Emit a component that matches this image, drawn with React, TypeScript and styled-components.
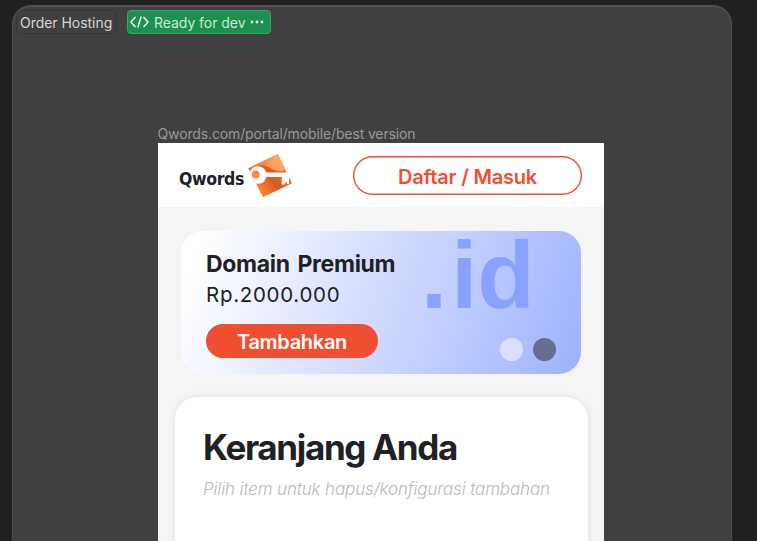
import React from "react";
import styled, { createGlobalStyle } from "styled-components";

const GlobalStyle = createGlobalStyle`
  * { box-sizing: border-box; }
  body { margin: 0; background: #202020; overflow: hidden; font-family: Inter, "Liberation Sans", sans-serif; }
`;

const Canvas = styled.div`
  height: 541px;
  padding: 5px 25px 0 12px;
  overflow: hidden;
  background: #202020;
`;

const Section = styled.section`
  height: 580px;
  border: 1.5px solid #525252;
  border-width: 2px 1px 1px;
  border-radius: 19px;
  background: #404040;
  overflow: hidden;
`;

const Labels = styled.div`
  display: flex;
  gap: 10px;
  padding: 3px 0 0 3px;
`;

const SectionName = styled.div`
  width: 101px;
  height: 24px;
  padding-left: 3px;
  border: 1px solid #373737;
  border-radius: 5px;
  color: #d6d6d6;
  font-size: 14px;
  line-height: 23px;
  letter-spacing: -0.04px;
  white-space: nowrap;
`;

const Status = styled.div`
  display: flex;
  align-items: center;
  width: 144px;
  height: 24px;
  padding-left: 2px;
  border: 1px solid #36a765;
  border-radius: 4px;
  background: #1b9150;
  color: #c9ead6;
  font-size: 14px;
  white-space: nowrap;
  svg { flex: none; }
`;

const StatusText = styled.span`
  width: 96px;
  margin-left: 5px;
  line-height: 23px;
  letter-spacing: -0.05px;
`;

const FrameName = styled.div`
  margin: 91px 0 0 144.5px;
  height: 18px;
  color: #989898;
  font-size: 14px;
  line-height: 18px;
  letter-spacing: -0.13px;
  white-space: nowrap;
`;

const Phone = styled.main`
  width: 446px;
  height: 440px;
  margin-left: 145px;
  background: #f5f5f5;
  overflow: hidden;
`;

const Header = styled.header`
  display: flex;
  justify-content: space-between;
  height: 64px;
  padding: 13px 22px 0 21px;
  background: #fff;
`;

const Brand = styled.div`
  display: flex;
  height: 45px;
  margin-top: -3px;
`;

const BrandName = styled.span`
  width: 69px;
  color: #202124;
  font: bold 17.5px/52px "DejaVu Sans Condensed", "DejaVu Sans", sans-serif;
  font-stretch: condensed;
  letter-spacing: -0.35px;
`;

const Login = styled.button`
  width: 229px;
  height: 39px;
  padding: 3px 0 0;
  border: 0;
  border-radius: 20px;
  box-shadow: inset 0 0 0 1.4px #f04e30;
  background: #fff;
  color: #f04e30;
  font: 600 20px/36px Inter, sans-serif;
  letter-spacing: -0.2px;
`;

const Banner = styled.section`
  display: flex;
  justify-content: space-between;
  width: 400px;
  height: 143px;
  margin: 24px 0 0 23px;
  padding-left: 25px;
  border-radius: 22px;
  background: linear-gradient(109deg, #fff 5%, #a0b3ff 98%);
`;

const Offer = styled.div`
  padding-top: 18px;
  color: #202124;
  white-space: nowrap;
`;

const Product = styled.h2`
  margin: 0;
  font-size: 23px;
  font-weight: 700;
  line-height: 30px;
  letter-spacing: -0.3px;
  word-spacing: 2.5px;
`;

const Price = styled.div`
  font-size: 20.5px;
  line-height: 32px;
  letter-spacing: 0.7px;
`;

const AddButton = styled.button`
  display: block;
  width: 172px;
  height: 34px;
  margin-top: 13px;
  padding: 3px 0 0;
  border: 0;
  border-radius: 17px;
  background: #f04e30;
  color: #fff;
  font: 600 20px/31px Inter, sans-serif;
  letter-spacing: -0.3px;
`;

const Promo = styled.div`
  width: 160px;
`;

const Extension = styled.div`
  height: 107px;
  color: #8aa2ff;
  font-family: "Liberation Sans", Arial, sans-serif;
  font-size: 94px;
  font-weight: 700;
  line-height: 90px;
  letter-spacing: 0;
  white-space: nowrap;
`;

const Point = styled.span`
  letter-spacing: 4px;
`;

const Dots = styled.div`
  display: flex;
  gap: 10px;
  margin-left: 79px;
`;

const Dot = styled.i<{ $active?: boolean }>`
  width: 23px;
  height: 23px;
  border-radius: 50%;
  background: ${({ $active }) => ($active ? "#666f91" : "#d9e0ff")};
`;

const Cart = styled.section`
  width: 413px;
  height: 220px;
  margin: 23px 0 0 17px;
  padding: 27px 0 0 28px;
  border-radius: 22px;
  background: #fff;
  box-shadow: 0 0 6px rgba(0, 0, 0, 0.1);
  white-space: nowrap;
`;

const CartTitle = styled.h1`
  margin: 0;
  color: #202124;
  font-size: 35px;
  font-weight: 700;
  line-height: 46px;
  letter-spacing: -1.35px;
`;

const CartHint = styled.p`
  margin: 7px 0 0;
  color: #b9b9b9;
  font-size: 17px;
  font-style: italic;
  font-weight: 300;
  line-height: 24px;
  letter-spacing: -0.14px;
`;

function KeyLogo() {
  return (
    <svg width="45" height="45" viewBox="0 0 45 45">
      <defs>
        <linearGradient id="tile" x1="0" y1="1" x2="1" y2="0.4">
          <stop offset="0.25" stopColor="#fa8438" />
          <stop offset="0.6" stopColor="#d9581f" />
          <stop offset="1" stopColor="#ee7432" />
        </linearGradient>
        <linearGradient id="shine" x1="0" y1="0.5" x2="1" y2="0.6">
          <stop offset="0" stopColor="#e96f2e" />
          <stop offset="0.7" stopColor="#ffa365" />
        </linearGradient>
      </defs>
      <path d="M.3 15.300 29.700 1.300 43.900 30.300 15 44.300Z" fill="url(#tile)" />
      <path d="M.3 15.300 29.700 1.300 37.500 16C34 21 26 17 20 14 14 11 7 12 2 18Z" fill="url(#shine)" />
      <g fill="#fff">
        <circle cx="10" cy="22" r="8.700" />
        <path d="M17 19.500H39.300L41 23V31H39.300L38.200 28.300 36.700 31.500H33.700V24H17Z" />
      </g>
      <circle cx="7.700" cy="21.500" r="3.900" fill="#fb883c" />
    </svg>
  );
}

export default function App() {
  return (
    <>
      <GlobalStyle />
      <Canvas>
        <Section>
          <Labels>
            <SectionName>Order Hosting</SectionName>
            <Status>
              <svg width="19" height="14" viewBox="0 0 19 14" fill="none" stroke="#fff" strokeWidth="1.4">
                <path d="M5.5 2 1 7l4.500 5M13.500 2 18 7l-4.500 5M11.200 1.500 7.800 12.500" />
              </svg>
              <StatusText>Ready for dev</StatusText>
              <svg width="14" height="4" viewBox="0 0 14 4" fill="#fff">
                <circle cx="2" cy="2" r="1.400" />
                <circle cx="7" cy="2" r="1.400" />
                <circle cx="12" cy="2" r="1.400" />
              </svg>
            </Status>
          </Labels>
          <FrameName>Qwords.com/portal/mobile/best version</FrameName>
          <Phone>
            <Header>
              <Brand>
                <BrandName>Qwords</BrandName>
                <KeyLogo />
              </Brand>
              <Login>Daftar / Masuk</Login>
            </Header>
            <Banner>
              <Offer>
                <Product>Domain Premium</Product>
                <Price>Rp.2000.000</Price>
                <AddButton>Tambahkan</AddButton>
              </Offer>
              <Promo>
                <Extension>
                  <Point>.</Point>id
                </Extension>
                <Dots>
                  <Dot />
                  <Dot $active />
                </Dots>
              </Promo>
            </Banner>
            <Cart>
              <CartTitle>Keranjang Anda</CartTitle>
              <CartHint>Pilih item untuk hapus/konfigurasi tambahan</CartHint>
            </Cart>
          </Phone>
        </Section>
      </Canvas>
    </>
  );
}
